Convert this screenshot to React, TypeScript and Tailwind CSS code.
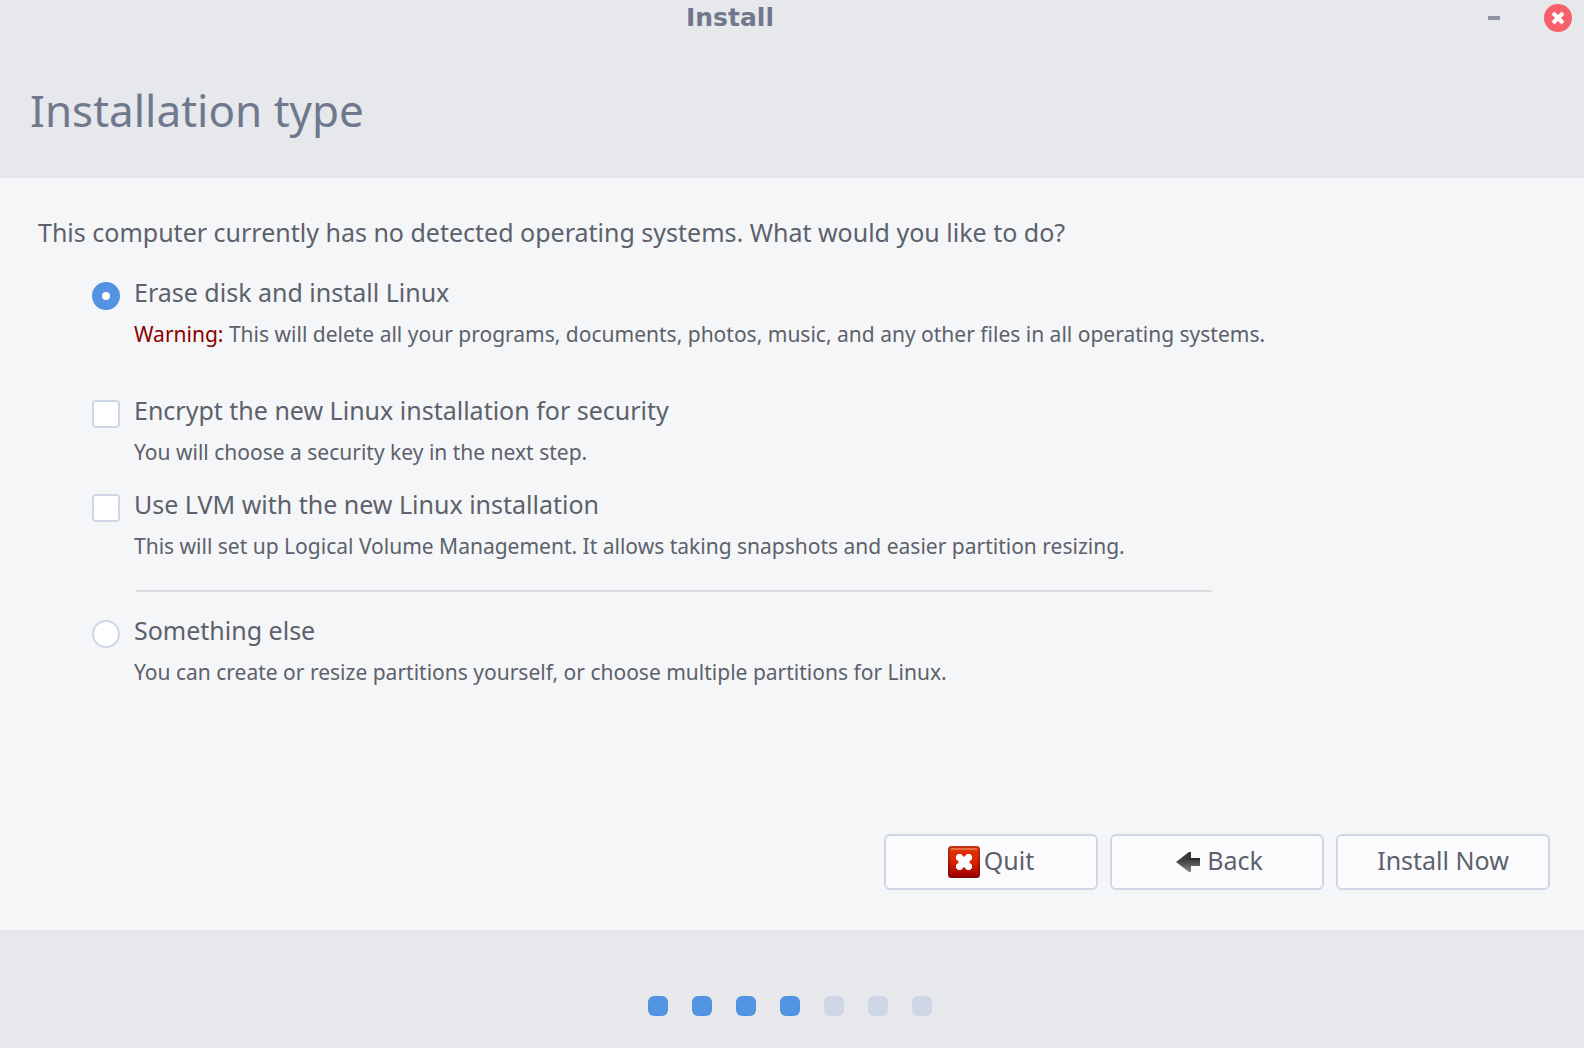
import { useState } from "react";
import type { InputHTMLAttributes, ReactNode } from "react";

type OptionProps = {
  id: string;
  label: string;
  children: ReactNode;
  className?: string;
} & InputHTMLAttributes<HTMLInputElement>;

function Option({ id, label, children, className = "", type, ...input }: OptionProps) {
  const shape =
    type === "radio"
      ? "rounded-full checked:border-[10px] checked:border-[#5294e2]"
      : "rounded-sm checked:border-[#5294e2] checked:bg-[#5294e2]";
  return (
    <div className={`flex gap-3.5 ${className}`}>
      <input
        id={id}
        type={type}
        aria-describedby={`${id}-note`}
        className={`mt-2.5 size-7 shrink-0 appearance-none border-2 border-[#cfd6e6] bg-white ${shape}`}
        {...input}
      />
      <div>
        <label htmlFor={id} className="block text-[25px] leading-10">
          {label}
        </label>
        <p id={`${id}-note`} className="text-[21px] leading-11">
          {children}
        </p>
      </div>
    </div>
  );
}

function CloseIcon() {
  return (
    <svg viewBox="0 0 28 28" className="size-7" aria-hidden="true">
      <circle cx="14" cy="14" r="14" fill="#f5606b" />
      <path d="M9 9l10 10M19 9l-10 10" stroke="#fff" strokeWidth="4" />
    </svg>
  );
}

function QuitIcon() {
  return (
    <svg viewBox="0 0 32 32" className="size-8" aria-hidden="true">
      <defs>
        <linearGradient id="quit-fill" x1="0" y1="0" x2="0" y2="1">
          <stop offset="0" stopColor="#e8501f" />
          <stop offset="0.15" stopColor="#dd3105" />
          <stop offset="0.5" stopColor="#d82400" />
          <stop offset="1" stopColor="#9c0000" />
        </linearGradient>
        <linearGradient id="quit-edge" x1="0" y1="0" x2="0" y2="1">
          <stop offset="0" stopColor="#c03010" />
          <stop offset="1" stopColor="#8c0000" />
        </linearGradient>
      </defs>
      <rect x="1" y="1" width="30" height="30" rx="2.5" fill="url(#quit-fill)" stroke="url(#quit-edge)" strokeWidth="2" />
      <path d="M3 3h26" stroke="#ee6a40" strokeWidth="2" />
      <path d="M8 10L10 8H13L16 11L19 8H22L24 10V13L21 16L24 19V22L22 24H19L16 21L13 24H10L8 22V19L11 16L8 13Z" fill="#fff" />
    </svg>
  );
}

function BackIcon() {
  return (
    <svg viewBox="0 0 32 32" className="size-8" aria-hidden="true">
      <defs>
        <linearGradient id="back-fill" x1="0" y1="0" x2="0" y2="1">
          <stop offset="0" stopColor="#2c2c2c" />
          <stop offset="0.5" stopColor="#484848" />
          <stop offset="1" stopColor="#8a8a8a" />
        </linearGradient>
      </defs>
      <path d="M5 16L18 6h2v6h9v8h-9v6h-2z" fill="url(#back-fill)" />
      <path d="M18 13h11" stroke="#2a2a2a" strokeWidth="2" />
    </svg>
  );
}

function ActionButton({ icon, children }: { icon?: ReactNode; children: ReactNode }) {
  return (
    <button
      type="button"
      className="flex h-14 w-[214px] items-center justify-center gap-1 rounded-md border-2 border-[#cfd6e6] bg-[#fbfbfd] text-[25px]"
    >
      {icon}
      <span className="-mt-0.5">{children}</span>
    </button>
  );
}

const TOTAL_STEPS = 7;
const CURRENT_STEP = 4;

export default function App() {
  const [mode, setMode] = useState("erase");
  const [encrypt, setEncrypt] = useState(false);
  const [lvm, setLvm] = useState(false);

  return (
    <div className="flex min-h-screen flex-col bg-[#e7e8eb] font-['Noto_Sans','Open_Sans',sans-serif] text-[#5c616c]">
      <header className="text-[#70788d]">
        <div className="flex h-9 items-center pr-3">
          <div className="flex-1 text-center font-['DejaVu_Sans',sans-serif] text-[25px] leading-9 font-bold">
            Install
          </div>
          <div className="flex items-center gap-9 pl-5">
            <button type="button" aria-label="Minimize" className="flex size-7 items-center justify-center">
              <span className="h-1 w-3 bg-[#9195a3]" />
            </button>
            <button type="button" aria-label="Close">
              <CloseIcon />
            </button>
          </div>
        </div>
        <h1 className="px-[30px] pt-[38px] pb-8 text-[44px] leading-[72px]">Installation type</h1>
      </header>

      <main className="flex flex-1 flex-col bg-[#f5f6f7]">
        <form className="flex flex-1 flex-col">
          <p className="px-[38px] pt-[34px] text-[25px] leading-10">
            This computer currently has no detected operating systems. What would you like to do?
          </p>
          <div className="pt-5 pr-8 pl-[92px]">
            <Option
              id="erase"
              type="radio"
              name="mode"
              label="Erase disk and install Linux"
              checked={mode === "erase"}
              onChange={() => setMode("erase")}
            >
              <span className="text-[#8b0000]">Warning:</span> This will delete all your programs, documents, photos,
              music, and any other files in all operating systems.
            </Option>
            <Option
              id="encrypt"
              type="checkbox"
              className="mt-[34px]"
              label="Encrypt the new Linux installation for security"
              checked={encrypt}
              onChange={(e) => setEncrypt(e.target.checked)}
            >
              You will choose a security key in the next step.
            </Option>
            <Option
              id="lvm"
              type="checkbox"
              className="mt-2.5"
              label="Use LVM with the new Linux installation"
              checked={lvm}
              onChange={(e) => setLvm(e.target.checked)}
            >
              This will set up Logical Volume Management. It allows taking snapshots and easier partition resizing.
            </Option>
            <hr className="mt-[22px] mr-[340px] mb-[18px] ml-11 border-t-2 border-[#dcdde1]" />
            <Option
              id="other"
              type="radio"
              name="mode"
              label="Something else"
              checked={mode === "other"}
              onChange={() => setMode("other")}
            >
              You can create or resize partitions yourself, or choose multiple partitions for Linux.
            </Option>
          </div>
          <div className="mt-auto flex justify-end gap-3 px-[34px] pb-10">
            <ActionButton icon={<QuitIcon />}>Quit</ActionButton>
            <ActionButton icon={<BackIcon />}>Back</ActionButton>
            <ActionButton>Install Now</ActionButton>
          </div>
        </form>
      </main>

      <footer className="flex h-[118px] items-center justify-center gap-6 pt-[34px] pr-1">
        {Array.from({ length: TOTAL_STEPS }, (_, i) => (
          <span key={i} className={`size-5 rounded-md ${i < CURRENT_STEP ? "bg-[#5294e2]" : "bg-[#cfd6e6]"}`} />
        ))}
      </footer>
    </div>
  );
}
